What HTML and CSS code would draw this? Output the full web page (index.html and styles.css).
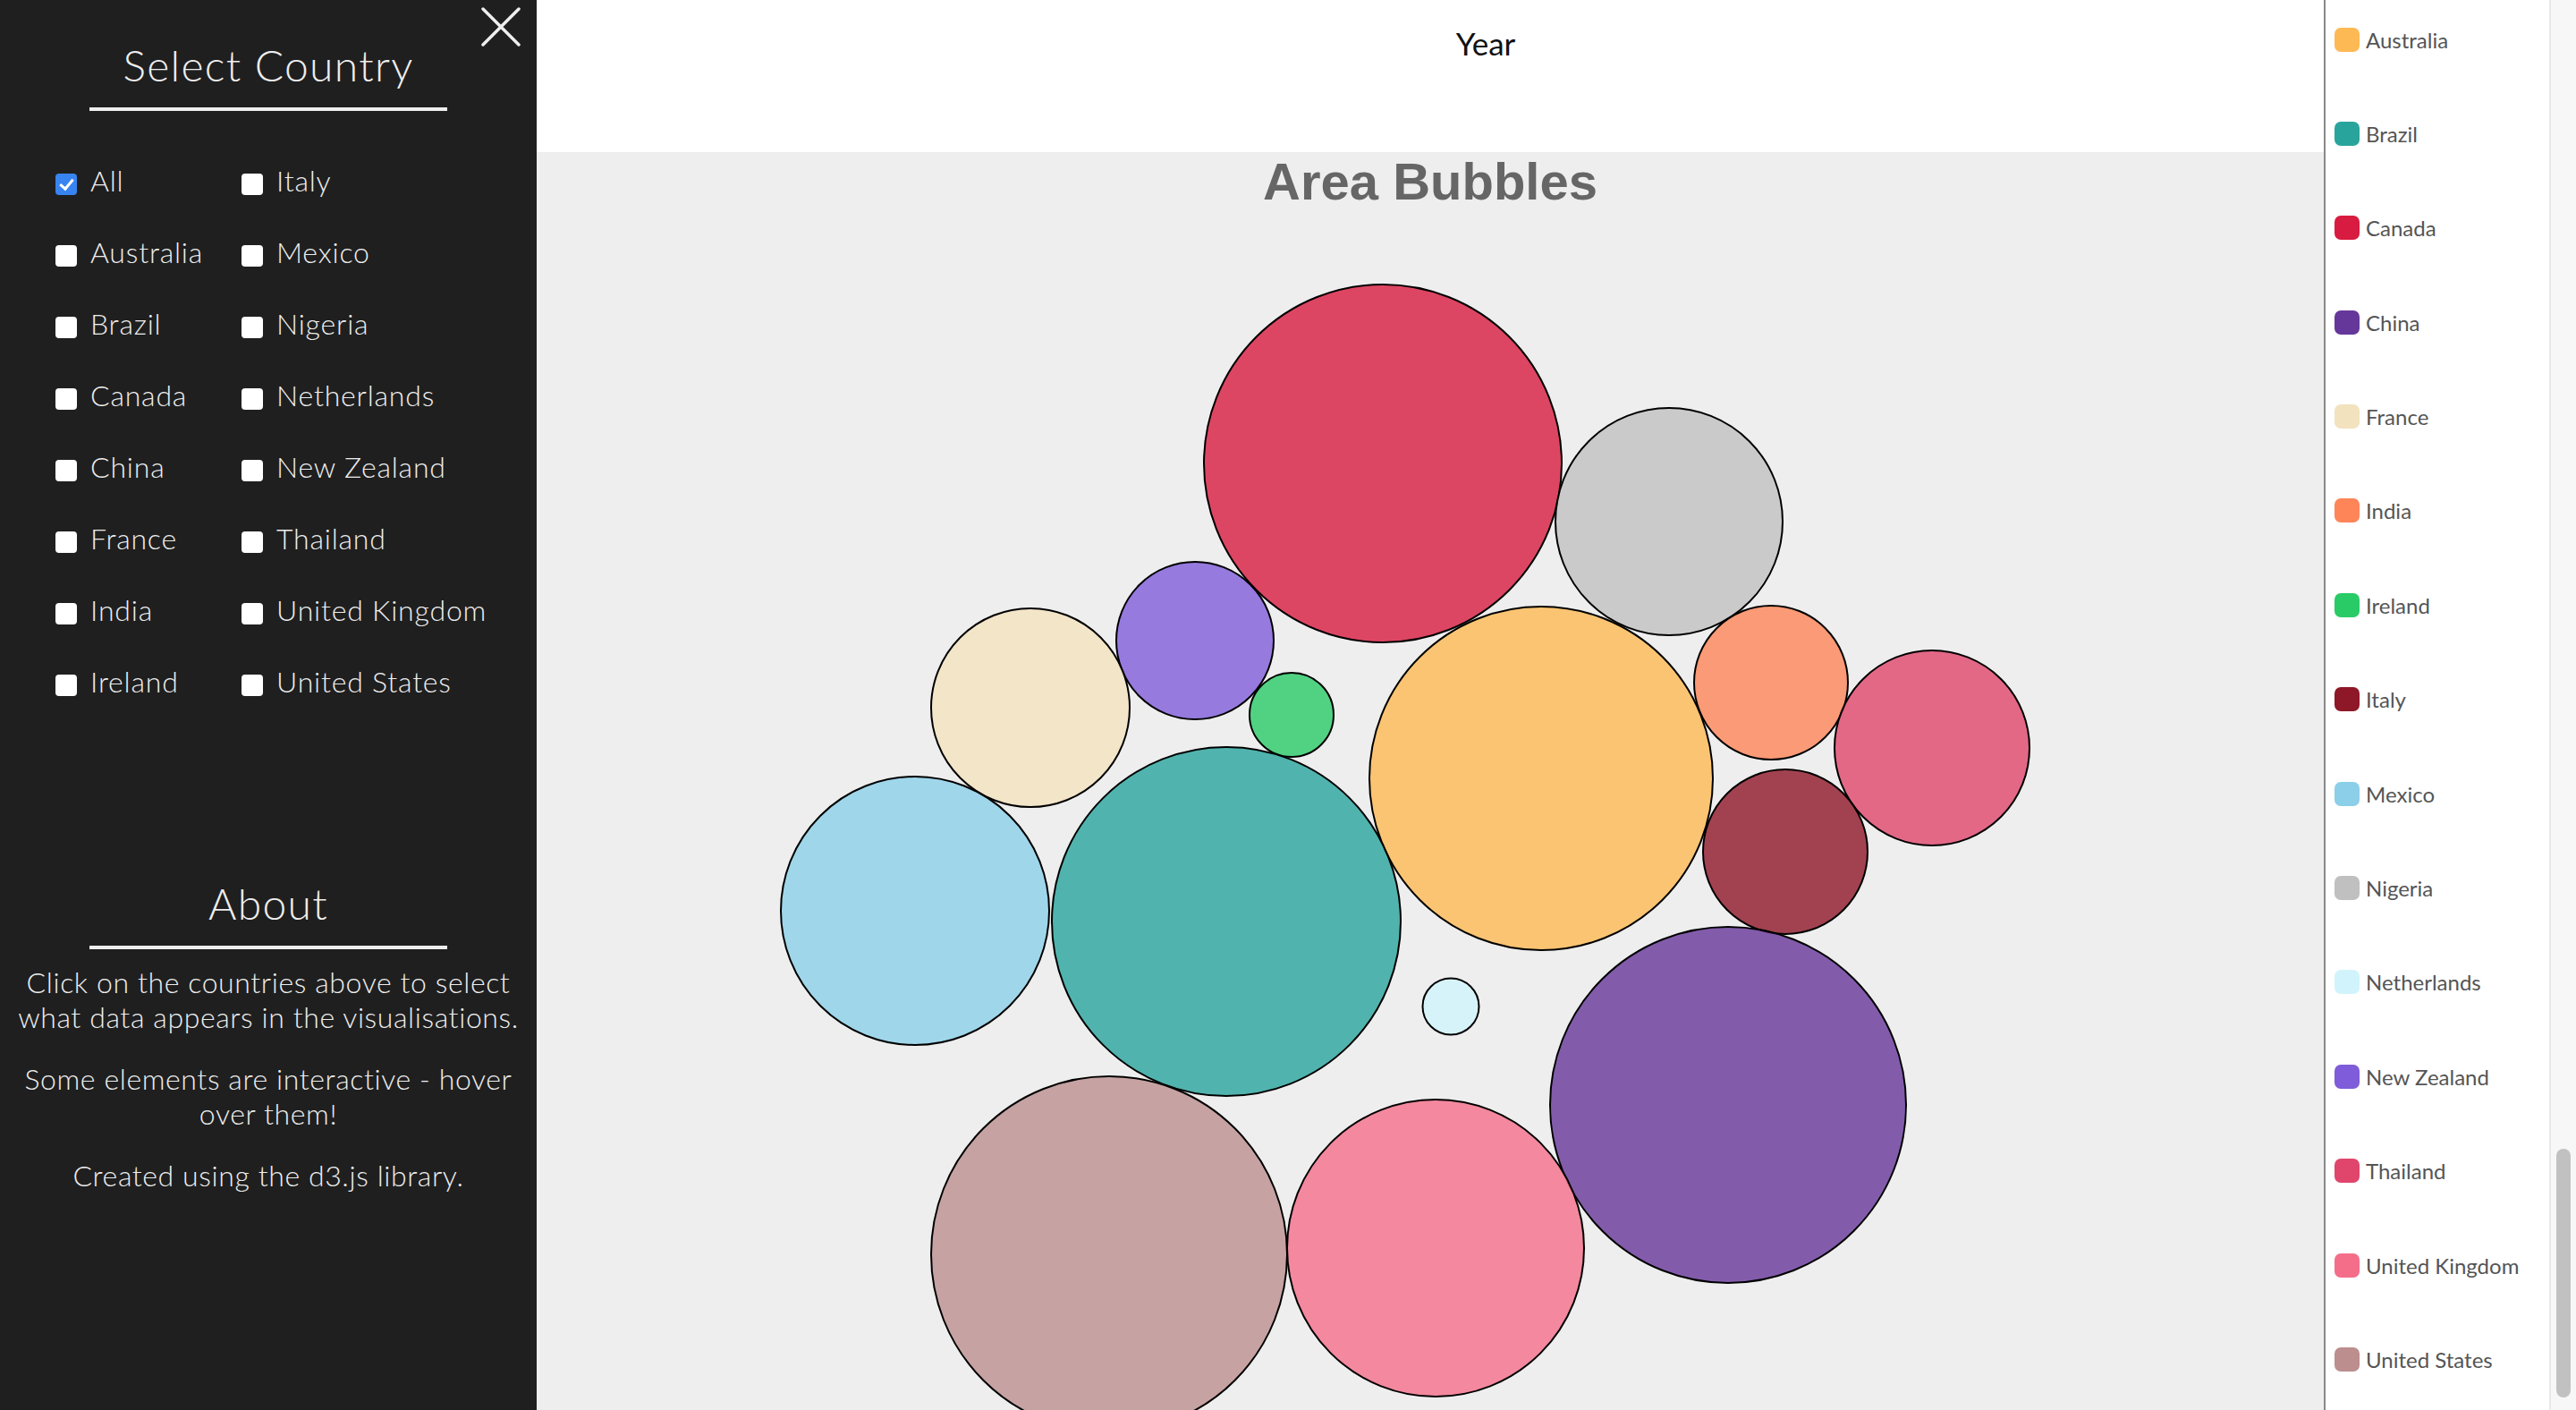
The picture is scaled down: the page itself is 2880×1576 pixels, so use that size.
FILE: index.html
```html
<!DOCTYPE html>
<html lang="en">
<head>
<meta charset="utf-8">
<title>Area Bubbles</title>
<link rel="stylesheet" href="styles.css">
</head>
<body>
<div class="app">
  <aside class="sidebar">
    <button class="close" aria-label="Close">
      <svg viewBox="0 0 44 44" width="44" height="44"><path d="M2 2 L42 42 M42 2 L2 42" stroke="#eeeeee" stroke-width="3.5" stroke-linecap="round" fill="none"/></svg>
    </button>
    <h1 class="side-title">Select Country</h1>
    <div class="rule"></div>
    <div class="country-grid">
      <label class="opt"><input type="checkbox" checked><span>All</span></label>
      <label class="opt"><input type="checkbox"><span>Italy</span></label>
      <label class="opt"><input type="checkbox"><span>Australia</span></label>
      <label class="opt"><input type="checkbox"><span>Mexico</span></label>
      <label class="opt"><input type="checkbox"><span>Brazil</span></label>
      <label class="opt"><input type="checkbox"><span>Nigeria</span></label>
      <label class="opt"><input type="checkbox"><span>Canada</span></label>
      <label class="opt"><input type="checkbox"><span>Netherlands</span></label>
      <label class="opt"><input type="checkbox"><span>China</span></label>
      <label class="opt"><input type="checkbox"><span>New Zealand</span></label>
      <label class="opt"><input type="checkbox"><span>France</span></label>
      <label class="opt"><input type="checkbox"><span>Thailand</span></label>
      <label class="opt"><input type="checkbox"><span>India</span></label>
      <label class="opt"><input type="checkbox"><span>United Kingdom</span></label>
      <label class="opt"><input type="checkbox"><span>Ireland</span></label>
      <label class="opt"><input type="checkbox"><span>United States</span></label>
    </div>
    <h2 class="side-title about-title">About</h2>
    <div class="rule"></div>
    <p class="about-text">Click on the countries above to select<br>what data appears in the visualisations.</p>
    <p class="about-text">Some elements are interactive - hover<br>over them!</p>
    <p class="about-text">Created using the d3.js library.</p>
  </aside>

  <main class="content">
    <header class="topbar"><span class="year">Year</span></header>
    <section class="chart">
      <h2 class="chart-title">Area Bubbles</h2>
      <svg class="bubbles" width="1998" height="1346" viewBox="0 0 1998 1346">
        <g stroke="#000" stroke-width="2" fill-opacity="0.8">
          <circle cx="946" cy="288" r="200" fill="#d81b40"/>
          <circle cx="1266" cy="353" r="127" fill="#c0c0c0"/>
          <circle cx="736" cy="486" r="88" fill="#7f5cd9"/>
          <circle cx="552" cy="561" r="111" fill="#f2e2be"/>
          <circle cx="844" cy="569" r="47" fill="#29cb67"/>
          <circle cx="1123" cy="640" r="192" fill="#fdb954"/>
          <circle cx="1380" cy="533" r="86" fill="#fd8558"/>
          <circle cx="1560" cy="606" r="109" fill="#e0466c"/>
          <circle cx="423" cy="788" r="150" fill="#8bcfe8"/>
          <circle cx="771" cy="800" r="195" fill="#29a49c"/>
          <circle cx="1396" cy="722" r="92" fill="#8e1728"/>
          <circle cx="1022" cy="895" r="31.5" fill="#d1f4fc"/>
          <circle cx="1332" cy="1005" r="199" fill="#66379a"/>
          <circle cx="640" cy="1172" r="199" fill="#bc8e8e"/>
          <circle cx="1005" cy="1165" r="166" fill="#f46e8a"/>
        </g>
      </svg>
    </section>
  </main>

  <aside class="legend">
    <div class="item"><span class="sw sw-aus"></span>Australia</div>
    <div class="item"><span class="sw sw-bra"></span>Brazil</div>
    <div class="item"><span class="sw sw-can"></span>Canada</div>
    <div class="item"><span class="sw sw-chn"></span>China</div>
    <div class="item"><span class="sw sw-fra"></span>France</div>
    <div class="item"><span class="sw sw-ind"></span>India</div>
    <div class="item"><span class="sw sw-irl"></span>Ireland</div>
    <div class="item"><span class="sw sw-ita"></span>Italy</div>
    <div class="item"><span class="sw sw-mex"></span>Mexico</div>
    <div class="item"><span class="sw sw-nga"></span>Nigeria</div>
    <div class="item"><span class="sw sw-nld"></span>Netherlands</div>
    <div class="item"><span class="sw sw-nzl"></span>New Zealand</div>
    <div class="item"><span class="sw sw-tha"></span>Thailand</div>
    <div class="item"><span class="sw sw-gbr"></span>United Kingdom</div>
    <div class="item"><span class="sw sw-usa"></span>United States</div>
  </aside>

  <div class="scrollbar"><div class="thumb"></div></div>
</div>
</body>
</html>
```

FILE: styles.css
```css
* { box-sizing: border-box; }

html, body {
  margin: 0;
  padding: 0;
  height: 100%;
  overflow: hidden;
}

body {
  font-family: "Lato", "Noto Sans", sans-serif;
  background: #ffffff;
}

.app {
  display: flex;
  height: 1576px;
  width: 2880px;
}

/* ---------- Sidebar ---------- */
.sidebar {
  position: relative;
  width: 600px;
  flex: 0 0 600px;
  background: #1f1f1f;
  color: #eeeeee;
  padding-top: 45px;
  display: flex;
  flex-direction: column;
  align-items: center;
}

.close {
  position: absolute;
  top: 8px;
  right: 18px;
  width: 44px;
  height: 44px;
  padding: 0;
  border: 0;
  background: transparent;
  cursor: pointer;
}
.close svg { display: block; }

.side-title {
  margin: 0;
  font-size: 48px;
  line-height: 56px;
  font-weight: 300;
  letter-spacing: 1.3px;
  text-align: center;
  color: #eeeeee;
}

.rule {
  width: 400px;
  height: 4px;
  background: #eeeeee;
  margin-top: 19px;
}

.country-grid {
  align-self: stretch;
  margin-top: 38px;
  padding-left: 62px;
  display: grid;
  grid-template-columns: 208px 1fr;
  grid-auto-rows: 80px;
}

.opt {
  display: flex;
  align-items: center;
  gap: 15px;
  font-size: 32px;
  line-height: 80px;
  font-weight: 300;
  letter-spacing: 0.8px;
  white-space: nowrap;
  cursor: pointer;
}

.opt input {
  appearance: none;
  -webkit-appearance: none;
  margin: 8px 0 0 0;
  width: 24px;
  height: 24px;
  border-radius: 4px;
  background: #ffffff;
  flex: 0 0 24px;
  position: relative;
}
.opt input:checked {
  background: #3884f0;
}
.opt input:checked::after {
  content: "";
  position: absolute;
  left: 8px;
  top: 3px;
  width: 6px;
  height: 12px;
  border: solid #ffffff;
  border-width: 0 3px 3px 0;
  transform: rotate(40deg);
}

.about-title {
  margin-top: 180px;
}
.about-title + .rule {
  margin-top: 19px;
}

.about-text {
  margin: 17px 0 13px 0;
  font-size: 32px;
  line-height: 39px;
  font-weight: 300;
  letter-spacing: 0.6px;
  text-align: center;
  white-space: nowrap;
}
.about-text + .about-text {
  margin-top: 17px;
}

/* ---------- Main ---------- */
.content {
  flex: 0 0 1998px;
  width: 1998px;
  display: flex;
  flex-direction: column;
  overflow: hidden;
}

.topbar {
  height: 170px;
  flex: 0 0 170px;
  background: #ffffff;
  text-align: center;
  padding: 27px 0 0 124px;
}

.year {
  font-size: 35px;
  line-height: 42px;
  color: #111111;
  font-weight: 400;
}

.chart {
  flex: 1;
  background: #eeeeee;
  padding-top: 4px;
}

.chart-title {
  margin: 0 0 -2px 0;
  font-family: "Liberation Sans", Arial, sans-serif;
  font-weight: 700;
  font-size: 58px;
  line-height: 58px;
  color: #666666;
  text-align: center;
}

.bubbles {
  display: block;
  overflow: visible;
}

/* ---------- Legend ---------- */
.legend {
  flex: 0 0 254px;
  width: 254px;
  background: #ffffff;
  border-left: 2px solid #888888;
  border-right: 2px solid #e9e9e9;
  padding: 30px 0 0 10px;
  display: flex;
  flex-direction: column;
  gap: 77.4px;
}

.item {
  display: flex;
  align-items: center;
  gap: 7px;
  height: 28px;
  font-size: 24px;
  color: #555555;
  white-space: nowrap;
}

.sw {
  width: 28px;
  height: 27px;
  flex: 0 0 28px;
  border-radius: 7px;
}
.sw-aus { background: #fdb954; }
.sw-bra { background: #29a49c; }
.sw-can { background: #d81b40; }
.sw-chn { background: #66379a; }
.sw-fra { background: #f2e2be; }
.sw-ind { background: #fd8558; }
.sw-irl { background: #29cb67; }
.sw-ita { background: #8e1728; }
.sw-mex { background: #8bcfe8; }
.sw-nga { background: #c0c0c0; }
.sw-nld { background: #d1f4fc; }
.sw-nzl { background: #7f5cd9; }
.sw-tha { background: #e0466c; }
.sw-gbr { background: #f46e8a; }
.sw-usa { background: #bc8e8e; }

/* ---------- Scrollbar ---------- */
.scrollbar {
  flex: 0 0 28px;
  width: 28px;
  background: #f7f7f7;
  padding: 1284px 0 0 6px;
}
.thumb {
  width: 16px;
  height: 278px;
  border-radius: 8px;
  background: #c1c1c1;
}
```
